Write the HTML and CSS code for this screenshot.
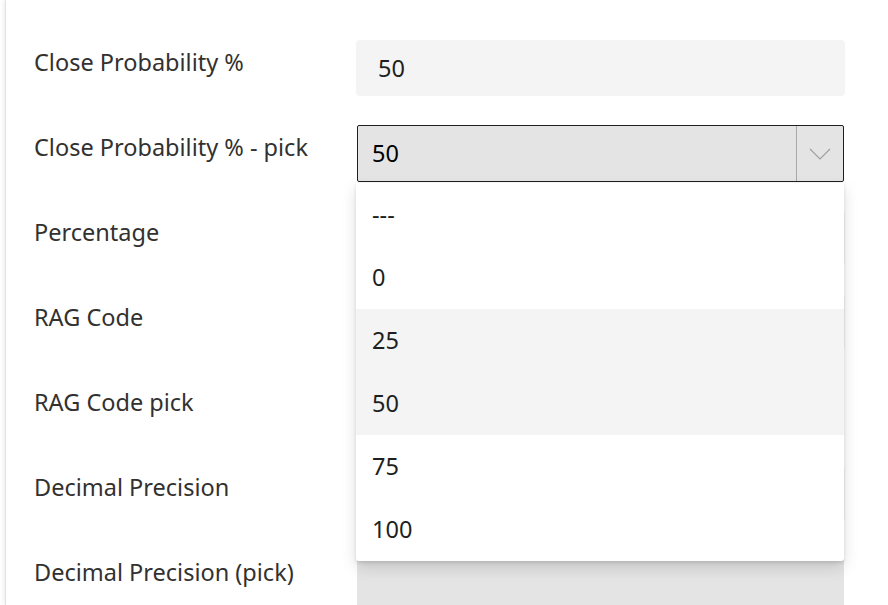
FILE: index.html
```html
<html>
    <head>
        <meta charset="utf-8">
        <link rel="stylesheet" href="styles.css">
    </head>
    <body>
        <div class="panel">
            <div class="form">
                <div class="row">
                    <label class="label" for="close-prob">Close Probability %</label>
                    <div class="control">
                        <input id="close-prob" class="text-field" type="text" value="50">
                    </div>
                </div>

                <div class="row">
                    <label class="label">Close Probability % - pick</label>
                    <div class="control">
                        <div class="select open">
                            <span class="select-value">50</span>
                            <span class="select-caret">
                                <svg width="22" height="12" viewBox="0 0 22 12"><polyline points="1,1 11,11 21,1" fill="none" stroke="#a19f9d" stroke-width="1.2"/></svg>
                            </span>
                        </div>
                        <ul class="options">
                            <li class="option">---</li>
                            <li class="option">0</li>
                            <li class="option hover">25</li>
                            <li class="option selected">50</li>
                            <li class="option">75</li>
                            <li class="option">100</li>
                        </ul>
                    </div>
                </div>

                <div class="row">
                    <label class="label">Percentage</label>
                    <div class="control"><input class="text-field" type="text"></div>
                </div>

                <div class="row">
                    <label class="label">RAG Code</label>
                    <div class="control"><input class="text-field" type="text"></div>
                </div>

                <div class="row">
                    <label class="label">RAG Code pick</label>
                    <div class="control"><div class="select"></div></div>
                </div>

                <div class="row">
                    <label class="label">Decimal Precision</label>
                    <div class="control"><input class="text-field" type="text"></div>
                </div>

                <div class="row">
                    <label class="label">Decimal Precision (pick)</label>
                    <div class="control"><div class="select"></div></div>
                </div>
            </div>
        </div>
    </body>
</html>
```

FILE: styles.css
```css
body {
    margin: 0;
    background: #fff;
    font-family: "Noto Sans", "Open Sans", sans-serif;
    overflow: hidden;
}

.panel {
    margin-left: 5px;
    height: 605px;
    border-left: 1px solid #e1e1e1;
    box-shadow: -2px 0 4px rgba(0, 0, 0, 0.06);
    background: #fff;
}

.form {
    padding: 40px 0 0 28px;
}

.row {
    display: flex;
    height: 85px;
}

.label {
    width: 322px;
    padding-top: 6px;
    font-size: 23.5px;
    line-height: 32px;
    color: #323130;
}

.control {
    position: relative;
    width: 489px;
}

.text-field {
    display: block;
    box-sizing: border-box;
    width: 100%;
    height: 56px;
    padding: 0 22px;
    border: none;
    border-radius: 4px;
    background: #f4f4f4;
    font-family: inherit;
    font-size: 23.5px;
    color: #201f1e;
    outline: none;
}

.select {
    box-sizing: border-box;
    display: flex;
    height: 57px;
    margin: 0 1px;
    background: #e4e4e4;
    border-radius: 2px;
}

.select.open {
    border: 1px solid #1f1f1f;
}

.select-value {
    flex: 1;
    padding-left: 14px;
    font-size: 23.5px;
    line-height: 55px;
    color: #000;
}

.select-caret {
    width: 46px;
    display: flex;
    align-items: center;
    justify-content: center;
    border-left: 1px solid #a8a8a8;
}

.options {
    position: absolute;
    z-index: 10;
    top: 58px;
    left: 0;
    width: 488px;
    margin: 0;
    padding: 0;
    list-style: none;
    background: #fff;
    border-radius: 0 0 3px 3px;
    box-shadow: 0 6.4px 14.4px rgba(0, 0, 0, 0.13), 0 1.2px 3.6px rgba(0, 0, 0, 0.11);
}

.option {
    height: 63px;
    padding-left: 16px;
    font-size: 23.5px;
    line-height: 63px;
    color: #201f1e;
}

.option.hover,
.option.selected {
    background: #f4f4f4;
}
```
